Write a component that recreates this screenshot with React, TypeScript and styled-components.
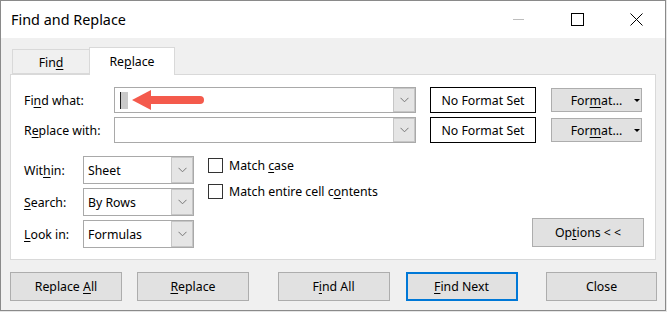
import React from "react";
import styled, { createGlobalStyle } from "styled-components";

const Global = createGlobalStyle`
  html, body { margin: 0; padding: 0; background: #e6e6e6; }
  body { font-family: "Segoe UI", "Noto Sans", "Liberation Sans", sans-serif; color: #000; }
  * { box-sizing: border-box; }
`;

const Window = styled.div`
  width: 666px;
  height: 311px;
  border: 1px solid #8a8a8a;
  background: #f0f0f0;
  display: flex;
  flex-direction: column;
`;

const TitleBar = styled.div`
  height: 37px;
  background: #fff;
  display: flex;
  align-items: center;
  padding-left: 10px;
`;

const Title = styled.div`
  font-size: 14.4px;
`;

const Caption = styled.div`
  margin-left: auto;
  display: flex;
  align-items: center;
  height: 100%;
`;

const CapBtn = styled.div<{ $w: number }>`
  width: ${(p) => p.$w}px;
  height: 100%;
  display: flex;
  align-items: center;
  justify-content: center;
`;

const Body = styled.div`
  flex: 1;
  display: flex;
  flex-direction: column;
  padding: 9px 9px 0 9px;
  font-size: 12.3px;
`;

const TabStrip = styled.div`
  display: flex;
  align-items: flex-end;
  height: 27px;
  padding-left: 2px;
  position: relative;
  z-index: 1;
`;

const Tab = styled.div<{ $active?: boolean; $w: number }>`
  width: ${(p) => p.$w}px;
  height: ${(p) => (p.$active ? 28 : 25)}px;
  margin-bottom: ${(p) => (p.$active ? -1 : 0)}px;
  background: ${(p) => (p.$active ? "#fff" : "#f0f0f0")};
  border: 1px solid #d9d9d9;
  border-bottom: ${(p) => (p.$active ? "none" : "1px solid #d9d9d9")};
  border-right: ${(p) => (p.$active ? "1px solid #d9d9d9" : "none")};
  display: flex;
  align-items: center;
  justify-content: center;
  padding-top: ${(p) => (p.$active ? 0 : 1)}px;
`;

const Panel = styled.div`
  height: 186px;
  background: #fff;
  border: 1px solid #d9d9d9;
  padding: 12px 11px 11px 13px;
  display: flex;
  flex-direction: column;
  position: relative;
`;

const Row = styled.div`
  display: flex;
  align-items: center;
  height: 26px;
  & + & { margin-top: 4px; }
`;

const Label = styled.div<{ $w: number }>`
  width: ${(p) => p.$w}px;
  flex-shrink: 0;
`;

const Txt = styled.span`
  white-space: pre;
`;

const U = styled.span`
  text-decoration: underline;
  text-underline-offset: 2px;
  text-decoration-thickness: 1px;
`;

const Combo = styled.div<{ $w: number; $h: number }>`
  width: ${(p) => p.$w}px;
  height: ${(p) => p.$h}px;
  border: 1px solid #a9a9a9;
  background: #fff;
  display: flex;
`;

const Field = styled.div`
  flex: 1;
  display: flex;
  align-items: center;
  padding-left: 4px;
`;

const DropBtn = styled.div<{ $w: number }>`
  width: ${(p) => p.$w}px;
  background: #e5e5e5;
  border: 1px solid #c6c6c6;
  display: flex;
  align-items: center;
  justify-content: center;
`;

const Caret = styled.div`
  width: 8px;
  height: 17px;
  margin-left: 1px;
  background: #c9c9c9;
  border-left: 1px solid #222;
`;

const FormatBox = styled.div`
  width: 106px;
  height: 26px;
  margin-left: 14px;
  border: 1px solid #000;
  display: flex;
  align-items: center;
  justify-content: center;
`;

const Button = styled.div<{ $w: number; $h: number; $focus?: boolean }>`
  width: ${(p) => p.$w}px;
  height: ${(p) => p.$h}px;
  background: #e1e1e1;
  border: ${(p) => (p.$focus ? "2px solid #0078d7" : "1px solid #adadad")};
  display: flex;
  align-items: center;
  justify-content: center;
  flex-shrink: 0;
`;

const FormatButton = styled(Button)`
  margin-left: 15px;
  padding-left: 18px;
`;

const Tri = styled.span`
  margin-left: 12px;
  width: 0;
  height: 0;
  border-left: 3px solid transparent;
  border-right: 3px solid transparent;
  border-top: 3px solid #000;
`;

const Lower = styled.div`
  display: flex;
  margin-top: 13px;
  flex: 1;
`;

const SelCol = styled.div`
  display: flex;
  flex-direction: column;
  gap: 4px;
`;

const SelRow = styled.div`
  display: flex;
  align-items: center;
  height: 28px;
`;

const CheckCol = styled.div`
  display: flex;
  flex-direction: column;
  margin-left: 14px;
  padding-top: 2px;
  gap: 11px;
`;

const CheckRow = styled.div`
  display: flex;
  align-items: center;
  height: 15px;
`;

const Box = styled.div`
  width: 15px;
  height: 15px;
  border: 1px solid #333;
  background: #fff;
  margin-right: 6px;
`;

const OptionsBtn = styled(Button)`
  margin-left: auto;
  align-self: flex-end;
  margin-bottom: 1px;
`;

const ButtonRow = styled.div`
  display: flex;
  justify-content: space-between;
  margin-top: 12px;
  width: 647px;
`;

const Group = styled.div<{ $gap: number }>`
  display: flex;
  gap: ${(p) => p.$gap}px;
`;

const ArrowWrap = styled.div`
  position: absolute;
  left: 121px;
  top: 14px;
  width: 72px;
  height: 22px;
  pointer-events: none;
`;

const Chevron = () => (
  <svg width="9" height="6" viewBox="0 0 9 6">
    <polyline points="0.5,0.8 4.5,4.8 8.5,0.8" fill="none" stroke="#777" strokeWidth="1" />
  </svg>
);

const Select = ({ value }: { value: string }) => (
  <Combo $w={111} $h={28}>
    <Field>{value}</Field>
    <DropBtn $w={22}>
      <Chevron />
    </DropBtn>
  </Combo>
);

export default function App() {
  return (
    <>
      <Global />
      <Window>
        <TitleBar>
          <Title>Find and Replace</Title>
          <Caption>
            <CapBtn $w={59}>
              <svg width="12" height="2" viewBox="0 0 12 2">
                <line x1="0" y1="0.5" x2="11" y2="0.5" stroke="#bdbdbd" strokeWidth="1" />
              </svg>
            </CapBtn>
            <CapBtn $w={59}>
              <svg width="13" height="13" viewBox="0 0 13 13">
                <rect x="0.5" y="0.5" width="12" height="12" fill="none" stroke="#000" strokeWidth="1" />
              </svg>
            </CapBtn>
            <CapBtn $w={58}>
              <svg width="13" height="13" viewBox="0 0 13 13">
                <path d="M0.5 0.5 L12.5 12.5 M12.5 0.5 L0.5 12.5" stroke="#000" strokeWidth="1" />
              </svg>
            </CapBtn>
          </Caption>
        </TitleBar>
        <Body>
          <TabStrip>
            <Tab $w={77}>
              <Txt>
                Fin<U>d</U>
              </Txt>
            </Tab>
            <Tab $w={86} $active>
              <Txt>
                Re<U>p</U>lace
              </Txt>
            </Tab>
          </TabStrip>
          <Panel>
            <Row>
              <Label $w={90}>
                Fi<U>n</U>d what:
              </Label>
              <Combo $w={302} $h={26}>
                <Field>
                  <Caret />
                </Field>
                <DropBtn $w={22}>
                  <Chevron />
                </DropBtn>
              </Combo>
              <FormatBox>No Format Set</FormatBox>
              <FormatButton $w={91} $h={24}>
                <Txt>
                  For<U>m</U>at...
                </Txt>
                <Tri />
              </FormatButton>
            </Row>
            <Row>
              <Label $w={90}>
                R<U>e</U>place with:
              </Label>
              <Combo $w={302} $h={26}>
                <Field />
                <DropBtn $w={22}>
                  <Chevron />
                </DropBtn>
              </Combo>
              <FormatBox>No Format Set</FormatBox>
              <FormatButton $w={91} $h={24}>
                <Txt>
                  For<U>m</U>at...
                </Txt>
                <Tri />
              </FormatButton>
            </Row>
            <Lower>
              <SelCol>
                <SelRow>
                  <Label $w={59}>
                    Wit<U>h</U>in:
                  </Label>
                  <Select value="Sheet" />
                </SelRow>
                <SelRow>
                  <Label $w={59}>
                    <U>S</U>earch:
                  </Label>
                  <Select value="By Rows" />
                </SelRow>
                <SelRow>
                  <Label $w={59}>
                    <U>L</U>ook in:
                  </Label>
                  <Select value="Formulas" />
                </SelRow>
              </SelCol>
              <CheckCol>
                <CheckRow>
                  <Box />
                  <Txt>
                    Match <U>c</U>ase
                  </Txt>
                </CheckRow>
                <CheckRow>
                  <Box />
                  <Txt>
                    Match entire cell c<U>o</U>ntents
                  </Txt>
                </CheckRow>
              </CheckCol>
              <OptionsBtn $w={112} $h={29}>
                <Txt>
                  Op<U>t</U>ions &lt; &lt;
                </Txt>
              </OptionsBtn>
            </Lower>
            <ArrowWrap>
              <svg width="72" height="22" viewBox="0 0 72 22">
                <polygon points="0,11 19,1 19,21" fill="#f45a4c" />
                <line x1="17" y1="11" x2="68" y2="11" stroke="#f45a4c" strokeWidth="8" strokeLinecap="round" />
              </svg>
            </ArrowWrap>
          </Panel>
          <ButtonRow>
            <Group $gap={15}>
              <Button $w={112} $h={29}>
                <Txt>
                  Replace <U>A</U>ll
                </Txt>
              </Button>
              <Button $w={112} $h={29}>
                <Txt>
                  <U>R</U>eplace
                </Txt>
              </Button>
            </Group>
            <Group $gap={16}>
              <Button $w={112} $h={29}>
                <Txt>
                  F<U>i</U>nd All
                </Txt>
              </Button>
              <Button $w={112} $h={29} $focus>
                <Txt>
                  <U>F</U>ind Next
                </Txt>
              </Button>
            </Group>
            <Button $w={111} $h={29}>
              <Txt>Close</Txt>
            </Button>
          </ButtonRow>
        </Body>
      </Window>
    </>
  );
}
